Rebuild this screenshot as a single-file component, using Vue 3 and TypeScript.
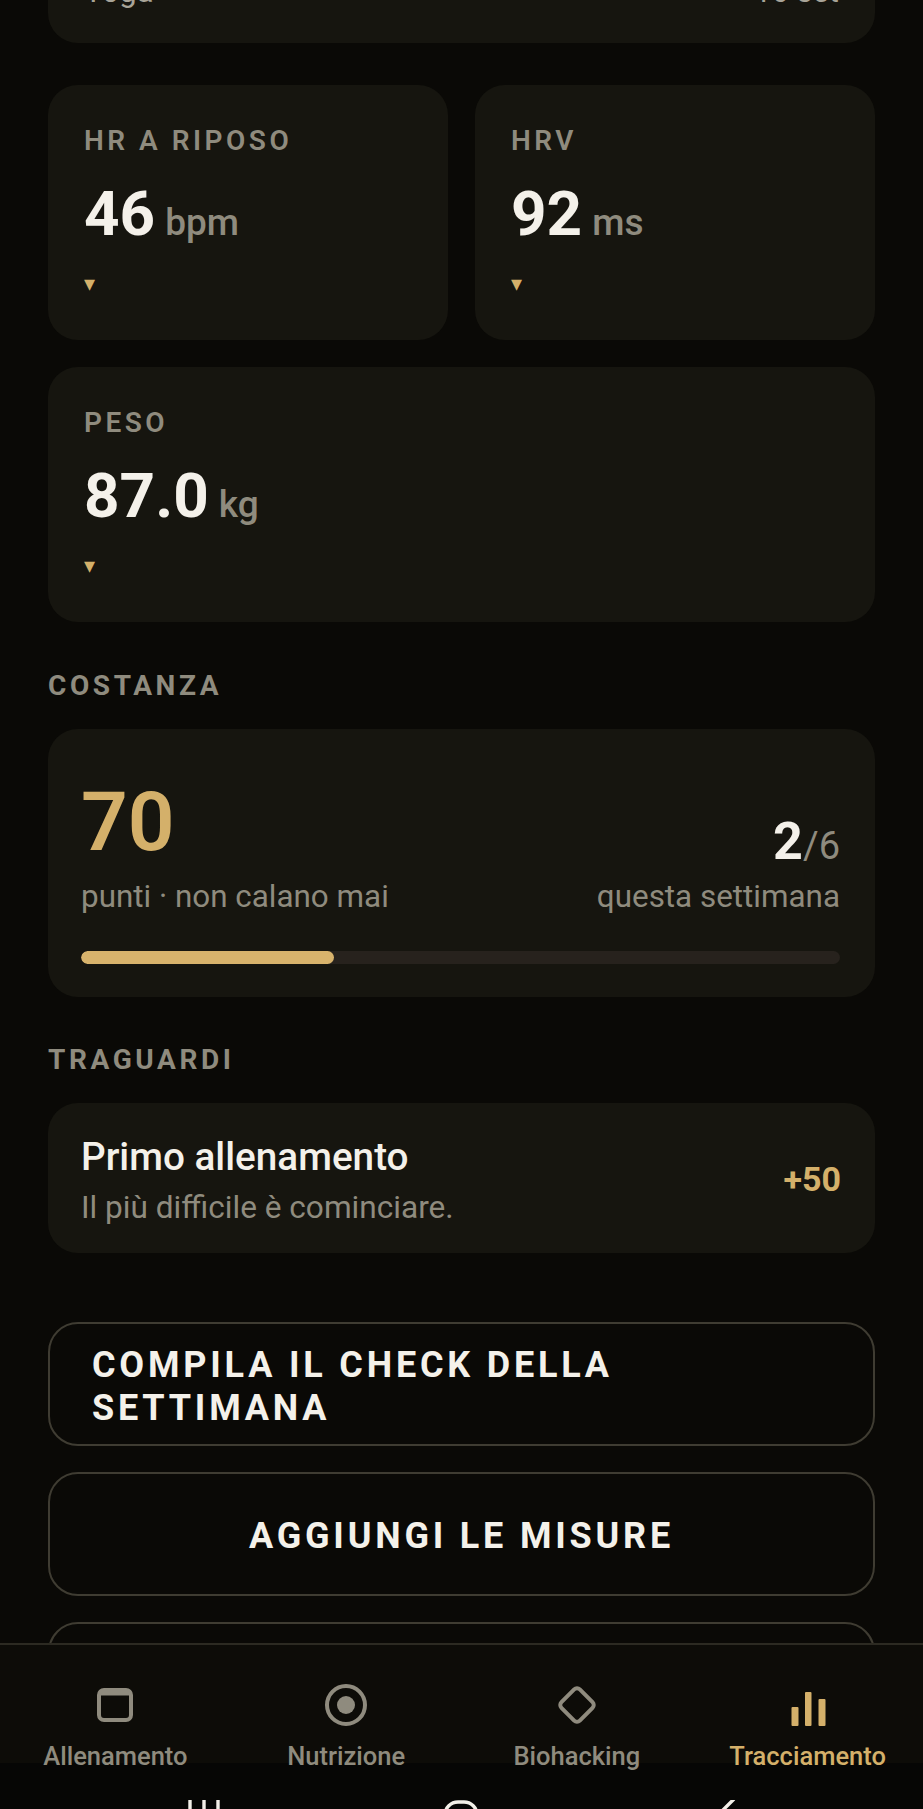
<template>
  <div class="screen">
    <main class="scroller">
      <div class="content">
        <section class="card session">
          <div class="session-row">
            <span>Yoga</span>
            <span>16 set</span>
          </div>
        </section>

        <div class="metric-grid">
          <section
            v-for="m in metrics"
            :key="m.label"
            class="card metric"
            :class="{ wide: m.wide }"
          >
            <div class="metric-label">{{ m.label }}</div>
            <div class="metric-value">
              {{ m.value }}<span class="metric-unit">{{ m.unit }}</span>
            </div>
            <div class="metric-trend">▾</div>
          </section>
        </div>

        <h2 class="section-title">COSTANZA</h2>
        <section class="card streak">
          <div class="streak-top">
            <div>
              <div class="points">{{ points }}</div>
              <div class="muted">punti · non calano mai</div>
            </div>
            <div class="week">
              <div class="week-count">{{ done }}<span>/{{ goal }}</span></div>
              <div class="muted">questa settimana</div>
            </div>
          </div>
          <div class="track">
            <div class="fill" :style="{ width: progress + '%' }"></div>
          </div>
        </section>

        <h2 class="section-title">TRAGUARDI</h2>
        <section class="card milestone">
          <div class="milestone-text">
            <div class="milestone-title">Primo allenamento</div>
            <div class="milestone-sub">Il più difficile è cominciare.</div>
          </div>
          <div class="milestone-points">+50</div>
        </section>

        <div class="actions">
          <button class="action">COMPILA IL CHECK DELLA SETTIMANA</button>
          <button class="action">AGGIUNGI LE MISURE</button>
          <button class="action"></button>
        </div>
      </div>
    </main>

    <nav class="tabbar">
      <div class="tab">
        <svg viewBox="0 0 48 48" width="48" height="48" fill="none" stroke="currentColor" stroke-width="4">
          <rect x="8" y="9" width="32" height="30" rx="5" />
          <path d="M8 12.5h32" stroke-width="4" />
        </svg>
        <span>Allenamento</span>
      </div>
      <div class="tab">
        <svg viewBox="0 0 48 48" width="48" height="48" fill="none" stroke="currentColor" stroke-width="4">
          <circle cx="24" cy="24" r="19" />
          <circle cx="24" cy="24" r="9" fill="currentColor" stroke="none" />
        </svg>
        <span>Nutrizione</span>
      </div>
      <div class="tab">
        <svg viewBox="0 0 48 48" width="48" height="48" fill="none" stroke="currentColor" stroke-width="4">
          <rect x="11" y="11" width="26" height="26" rx="4" transform="rotate(45 24 24)" />
        </svg>
        <span>Biohacking</span>
      </div>
      <div class="tab active">
        <svg viewBox="0 0 48 48" width="48" height="48" fill="currentColor">
          <rect x="7.5" y="26" width="7" height="19" rx="1" />
          <rect x="21" y="11" width="6.5" height="34" rx="1" />
          <rect x="34.5" y="18" width="7" height="27" rx="1" />
        </svg>
        <span>Tracciamento</span>
      </div>
    </nav>

    <footer class="system-bar">
      <svg class="sys-recents" viewBox="0 0 32 24" width="32" height="24" fill="none" stroke="#f2efe8" stroke-width="3.4">
        <path d="M2 0v24M16 0v24M30 0v24" />
      </svg>
      <svg class="sys-home" viewBox="0 0 36 36" width="36" height="36" fill="none" stroke="#f2efe8" stroke-width="3.4">
        <rect x="2" y="2" width="32" height="32" rx="13" />
      </svg>
      <svg class="sys-back" viewBox="0 0 24 24" width="24" height="24" fill="none" stroke="#f2efe8" stroke-width="3.4">
        <path d="M19 -1L7 11l12 12" />
      </svg>
    </footer>
  </div>
</template>

<script setup lang="ts">
interface Metric {
  label: string;
  value: string;
  unit: string;
  wide?: boolean;
}

const metrics: Metric[] = [
  { label: "HR A RIPOSO", value: "46", unit: "bpm" },
  { label: "HRV", value: "92", unit: "ms" },
  { label: "PESO", value: "87.0", unit: "kg", wide: true },
];

const points = 70;
const done = 2;
const goal = 6;
const progress = (done / goal) * 100;
</script>

<style scoped>
.screen {
  width: 923px;
  height: 1809px;
  display: flex;
  flex-direction: column;
  overflow: hidden;
  background: #0a0906;
  font-family: Roboto, "Liberation Sans", sans-serif;
  color: #f4f1ea;
}

.scroller {
  flex: 1;
  min-height: 0;
  overflow: hidden;
}

/* list is scrolled: the first card sits mostly above the fold */
.content {
  margin-top: -120px;
  padding: 0 48px;
}

.card {
  background: #16150f;
  border-radius: 30px;
}

.session {
  height: 163px;
  padding: 90px 36px 0;
  box-sizing: border-box;
  margin-bottom: 42px;
}

.session-row {
  display: flex;
  justify-content: space-between;
  font-size: 31px;
  line-height: 44px;
  color: #a8a498;
}

.metric-grid {
  display: grid;
  grid-template-columns: 1fr 1fr;
  gap: 27px;
  padding-bottom: 1px;
}

.metric {
  height: 255px;
  box-sizing: border-box;
  padding: 40px 36px 0;
}

.metric.wide {
  grid-column: 1 / 3;
}

.metric-label {
  font-size: 28px;
  line-height: 32px;
  font-weight: 600;
  letter-spacing: 3.5px;
  color: #8f8b7e;
}

.metric-value {
  margin-top: 20px;
  font-size: 62px;
  line-height: 74px;
  font-weight: 700;
}

.metric-unit {
  margin-left: 10px;
  font-size: 37px;
  font-weight: 500;
  color: #8f8b7e;
}

.metric-trend {
  margin-top: 10px;
  font-family: "DejaVu Sans", sans-serif;
  font-size: 22px;
  line-height: 28px;
  color: #d4b06a;
}

.section-title {
  margin: 47px 0 27px;
  font-size: 28px;
  line-height: 32px;
  font-weight: 700;
  letter-spacing: 3.6px;
  color: #8f8b7e;
}

.streak {
  height: 268px;
  box-sizing: border-box;
  padding: 51px 35px 0 33px;
}

.streak-top {
  display: flex;
  justify-content: space-between;
  align-items: flex-end;
}

.points {
  font-size: 82px;
  line-height: 84px;
  font-weight: 600;
  color: #d4b06a;
}

.muted {
  margin-top: 13px;
  font-size: 31.4px;
  line-height: 40px;
  color: #8f8b7e;
}

.week {
  text-align: right;
}

.week .muted {
  margin-top: 8px;
}

.week-count {
  font-size: 52px;
  line-height: 46px;
  font-weight: 700;
}

.week-count span {
  font-size: 38px;
  font-weight: 400;
  color: #8f8b7e;
}

.track {
  margin-top: 34px;
  height: 13px;
  border-radius: 7px;
  background: #27221d;
  overflow: hidden;
}

.fill {
  height: 100%;
  border-radius: 7px;
  background: #d8b36c;
}

.milestone {
  margin-top: 2px;
  height: 150px;
  box-sizing: border-box;
  padding: 0 34px 0 33px;
  display: flex;
  justify-content: space-between;
  align-items: center;
}

.milestone-text {
  padding-top: 6px;
}

.milestone-title {
  font-size: 38.7px;
  line-height: 44px;
  font-weight: 500;
}

.milestone-sub {
  margin-top: 10px;
  font-size: 31.6px;
  line-height: 38px;
  color: #8f8b7e;
}

.milestone-points {
  padding-top: 2px;
  font-size: 34px;
  font-weight: 700;
  color: #d4b06a;
}

.actions {
  margin-top: 69px;
  display: flex;
  flex-direction: column;
  gap: 26px;
}

.action {
  height: 124px;
  box-sizing: border-box;
  padding: 5px 42px 0;
  display: flex;
  align-items: center;
  justify-content: center;
  background: transparent;
  border: 2px solid #3f3c32;
  border-radius: 30px;
  font-family: inherit;
  font-size: 36px;
  line-height: 43px;
  font-weight: 700;
  letter-spacing: 3.8px;
  text-align: left;
  color: #f4f1ea;
}

.tabbar {
  flex: none;
  height: 120px;
  box-sizing: border-box;
  border-top: 2px solid #2c2a22;
  background: #0d0c08;
  display: grid;
  grid-template-columns: repeat(4, 1fr);
  position: relative;
  z-index: 1;
}

.tab {
  display: flex;
  flex-direction: column;
  align-items: center;
  padding-top: 36px;
  color: #8f8b7e;
  font-size: 25.5px;
  font-weight: 500;
  line-height: 30px;
}

.tab span {
  margin-top: 12px;
  white-space: nowrap;
}

.tab.active {
  color: #d4b06a;
}

.system-bar {
  flex: none;
  height: 46px;
  background: #060605;
  position: relative;
}

.system-bar svg {
  position: absolute;
  top: 37px;
}

.sys-recents {
  left: 188px;
}

.sys-home {
  left: 443px;
}

.sys-back {
  left: 715px;
}
</style>

<style>
html,
body {
  margin: 0;
  background: #0a0906;
}
</style>
